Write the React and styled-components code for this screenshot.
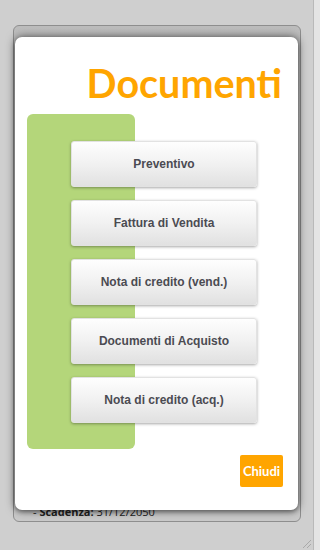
import React from "react";
import styled, { createGlobalStyle } from "styled-components";

const GlobalStyle = createGlobalStyle`
  html, body {
    margin: 0;
    padding: 0;
    width: 320px;
    height: 550px;
    overflow: hidden;
    background: #cfcfcf;
  }
`;

const Screen = styled.div`
  display: flex;
  width: 320px;
  height: 550px;
`;

const Stage = styled.div`
  position: relative;
  flex: 1;
  background: #cfcfcf;
  padding: 25px 12px 0 13px;
`;

const SideStrip = styled.div`
  width: 6px;
  background: #e4e4e4;
  border-left: 1px solid #b9b9b9;
`;

const BackPanel = styled.div`
  position: relative;
  border: 1px solid #8e8e8e;
  border-radius: 6px;
  background: linear-gradient(#bdbdbd, #c9c9c9 20%, #c9c9c9);
  display: flex;
  align-items: flex-end;
  padding: 0 0 2px 19px;
  box-sizing: border-box;
  height: 497px;
`;

const DueLine = styled.div`
  font-family: "Open Sans", "DejaVu Sans", sans-serif;
  font-size: 11px;
  color: #222;
  line-height: 14px;
  b {
    font-weight: 700;
  }
`;

const Modal = styled.div`
  position: absolute;
  top: 11px;
  left: 1px;
  width: 283px;
  height: 473px;
  background: #fff;
  border-radius: 7px;
  box-shadow: 0 0 10px rgba(0, 0, 0, 0.6), 0 2px 4px rgba(0, 0, 0, 0.3);
  display: flex;
  flex-direction: column;
  box-sizing: border-box;
  padding: 27px 15px 0 12px;
`;

const Title = styled.h1`
  margin: 0 1px 0 0;
  text-align: right;
  font-family: Lato, "Noto Sans", sans-serif;
  font-weight: 700;
  font-size: 39.5px;
  line-height: 38px;
  color: #ffa500;
`;

const Body = styled.div`
  display: grid;
  margin-top: 12px;
`;

const GreenBand = styled.div`
  grid-area: 1 / 1;
  width: 108px;
  height: 335px;
  background: #b4d67a;
  border-radius: 6px;
`;

const ButtonList = styled.div`
  grid-area: 1 / 1;
  display: flex;
  flex-direction: column;
  gap: 13px;
  padding: 27px 0 0 44px;
`;

const DocButton = styled.button`
  width: 186px;
  height: 46px;
  border: 1px solid #e2e2e2;
  border-radius: 3px;
  background: linear-gradient(#fefefe, #f1f1f1 50%, #e1e1e1);
  box-shadow: 0 1px 3px rgba(0, 0, 0, 0.35);
  font-family: "Liberation Sans", Arial, sans-serif;
  font-weight: 700;
  font-size: 12px;
  color: #4b4b52;
  cursor: pointer;
  padding: 0;
`;

const Footer = styled.div`
  display: flex;
  justify-content: flex-end;
  margin-top: 6px;
`;

const CloseButton = styled.button`
  width: 43px;
  height: 32px;
  border: none;
  border-radius: 2px;
  background: #ffa500;
  color: #fff;
  font-family: Lato, "Noto Sans", sans-serif;
  font-weight: 700;
  font-size: 13px;
  padding: 0;
  cursor: pointer;
`;

const Grip = styled.svg`
  position: absolute;
  right: 1px;
  bottom: 1px;
`;

const documents = [
  "Preventivo",
  "Fattura di Vendita",
  "Nota di credito (vend.)",
  "Documenti di Acquisto",
  "Nota di credito (acq.)",
];

export default function App() {
  return (
    <>
      <GlobalStyle />
      <Screen>
        <Stage>
          <BackPanel>
            <DueLine>
              - <b>Scadenza:</b> 31/12/2050
            </DueLine>
            <Modal>
              <Title>Documenti</Title>
              <Body>
                <GreenBand />
                <ButtonList>
                  {documents.map((d) => (
                    <DocButton key={d}>{d}</DocButton>
                  ))}
                </ButtonList>
              </Body>
              <Footer>
                <CloseButton>Chiudi</CloseButton>
              </Footer>
            </Modal>
          </BackPanel>
          <Grip width="12" height="12" viewBox="0 0 12 12">
            <path d="M11 3 L3 11 M11 7 L7 11" stroke="#a9a9a9" strokeWidth="1" />
          </Grip>
        </Stage>
        <SideStrip />
      </Screen>
    </>
  );
}
